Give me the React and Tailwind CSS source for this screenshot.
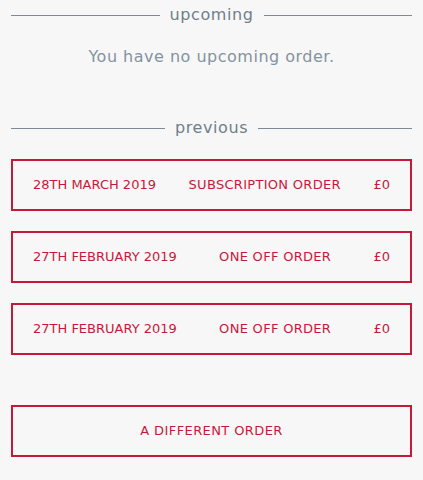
import React from 'react';

const orders = [
  { date: '28th March 2019', type: 'Subscription order', price: '£0' },
  { date: '27th February 2019', type: 'One off order', price: '£0' },
  { date: '27th February 2019', type: 'One off order', price: '£0' },
];

const Divider = ({ label }) => (
  <div className="flex items-center gap-2.5">
    <div className="h-px flex-1 bg-[#7d8b97]" />
    <span className="text-[16px] leading-5 tracking-[0.6px] text-[#6f7f8b]">{label}</span>
    <div className="h-px flex-1 bg-[#7d8b97]" />
  </div>
);

const App = () => {
  return (
    <div
      className="min-h-[480px] bg-[#f7f7f7] px-[11px] pt-[5px]"
      style={{ fontFamily: '"DejaVu Sans", sans-serif' }}
    >
      <Divider label="upcoming" />
      <p className="mt-[22px] text-center text-[16px] leading-5 tracking-[0.5px] text-[#8493a0]">
        You have no upcoming order.
      </p>

      <div className="mt-[51px]">
        <Divider label="previous" />
      </div>

      <div className="mt-[21px] flex flex-col gap-5">
        {orders.map((o, i) => (
          <div
            key={i}
            className="flex h-[52px] items-center justify-between border-2 border-[#c8183a] pl-5 pr-5 text-[13px] uppercase text-[#c8183a]"
          >
            <span>{o.date}</span>
            <span className="tracking-[0.3px]">{o.type}</span>
            <span>{o.price}</span>
          </div>
        ))}
      </div>

      <button className="mt-[50px] flex h-[52px] w-full items-center justify-center border-2 border-[#c8183a] text-[13px] uppercase tracking-[0.4px] text-[#c8183a]">
        A different order
      </button>
    </div>
  );
};

export default App;
